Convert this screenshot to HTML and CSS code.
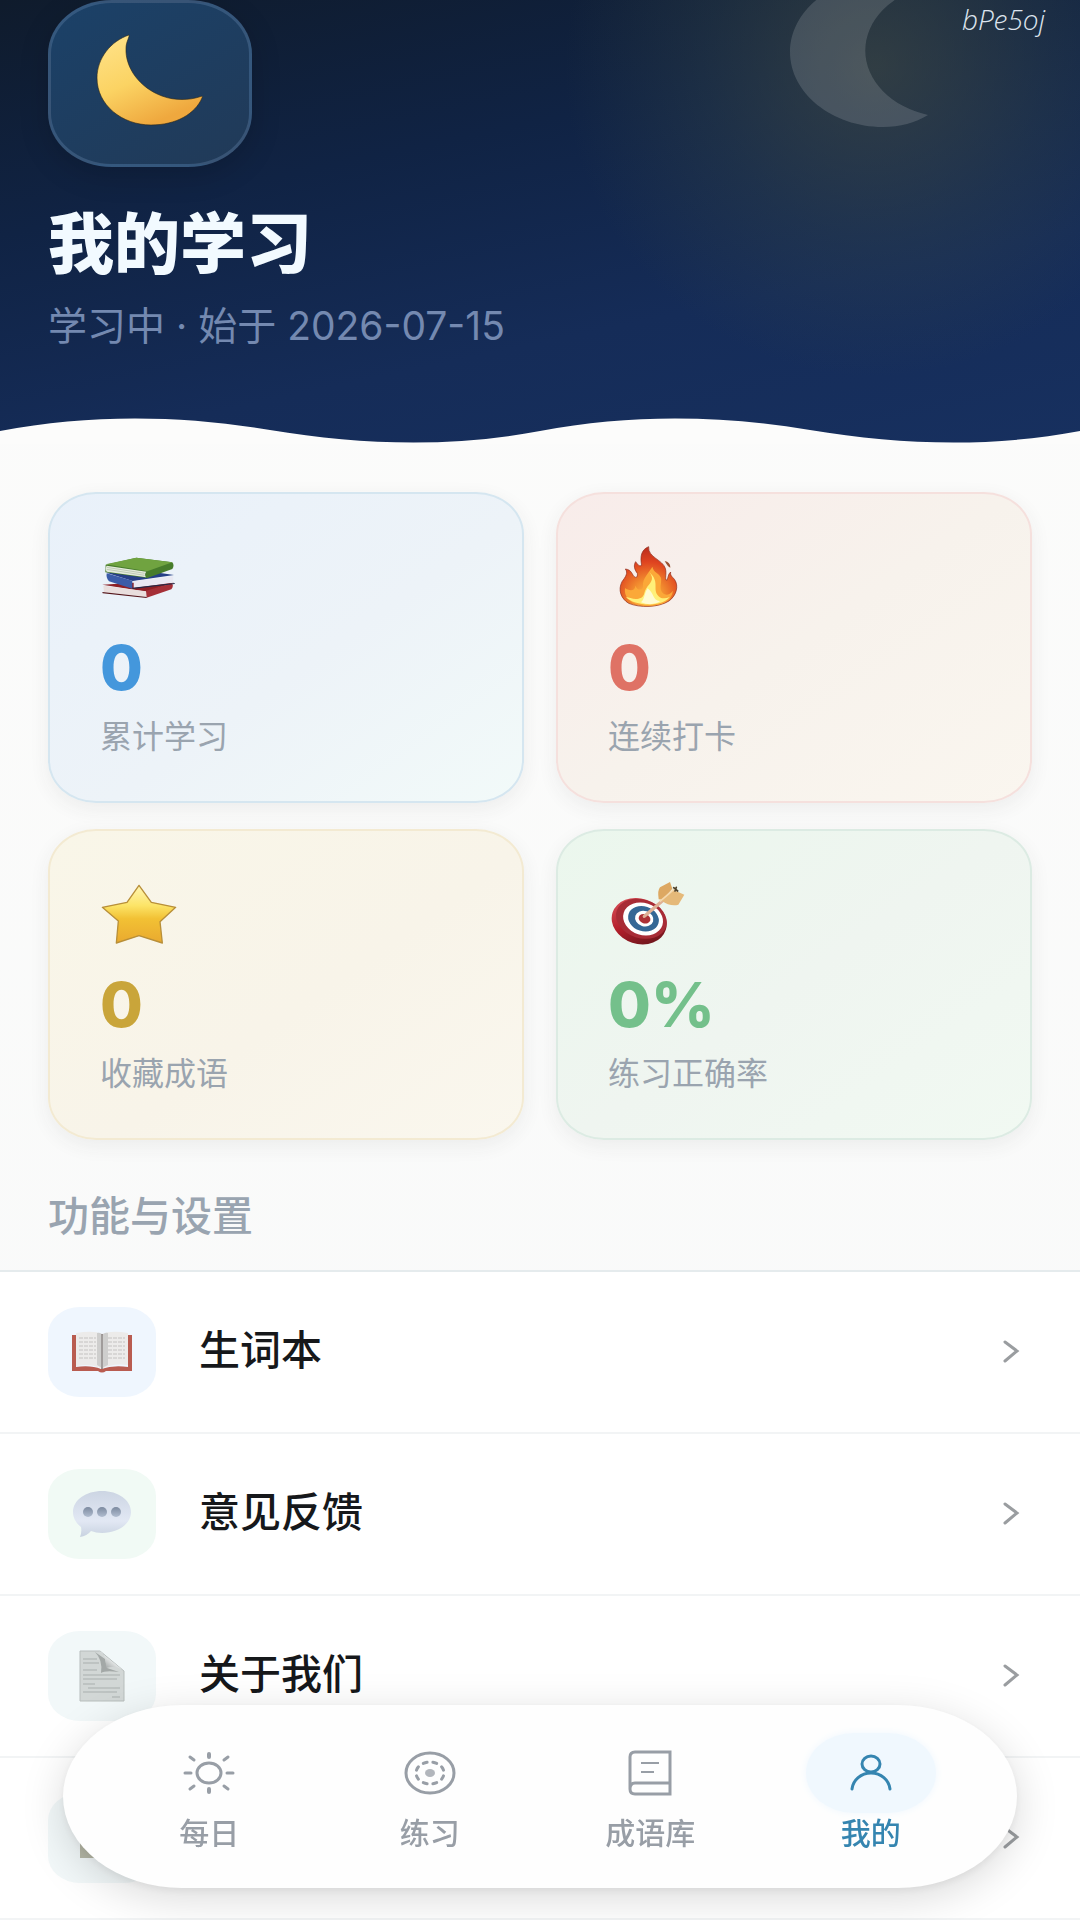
FILE: index.html
```
<!DOCTYPE html>

<html lang="zh-CN">
<head>
  <meta charset="UTF-8">
  <meta name="viewport" content="width=device-width, initial-scale=1.0">
  <title>我的学习</title>
  <link rel="stylesheet" href="styles.css">
</head>
<body>
  <!-- 顶部夜空 -->
  <header class="hero">
    <svg class="hero-moon" viewBox="0 0 144 128" aria-hidden="true">
      <path d="M140 -14C122 -22 110 -23 95 -23C44 -23 2 11 2 52C2 93 44 127 95 127C112 127 127 123 140 115A86 67 0 0 1 140 -14Z" fill="#fff" fill-opacity=".14"/>
    </svg>
    <span class="hero-tag">bPe5oj</span>

    <div class="avatar">
      <svg width="108" height="92" viewBox="0 0 108 92" aria-hidden="true">
        <defs>
          <linearGradient id="moon" x1="0" y1="0" x2=".5" y2="1">
            <stop offset="0" stop-color="#ffe48c"/>
            <stop offset=".55" stop-color="#fbd363"/>
            <stop offset="1" stop-color="#efa83e"/>
          </linearGradient>
        </defs>
        <path d="M33 1C15 7 1 24 1 44C1 71 26 91 55 91C80 91 99 80 106 64C107 62 106 62 103 63C94 66 79 67 66 62C44 54 29 34 30 14C30 8 34 2 33 1Z" fill="url(#moon)" stroke="#2a2417" stroke-opacity=".6"/>
      </svg>
    </div>
    <h1>我的学习</h1>
    <p class="hero-sub">学习中 · 始于 2026-07-15</p>

    <svg class="wave" viewBox="0 0 1080 26" preserveAspectRatio="none" aria-hidden="true">
      <path d="M0 13C90 -4 180 -3 270 12S450 30 540 13S720 -3 810 12S990 30 1080 13V26H0Z" fill="#fcfcfb"/>
    </svg>
  </header>

  <main>
    <!-- 学习统计 -->
    <section class="stats">
      <div class="card blue">
        <svg class="emoji" viewBox="0 0 240 210" aria-hidden="true">
          <path d="M7 128L100 122L222 122L140 149Z" fill="#8d2026"/>
          <path d="M10 131L138 148V165L12 151Z" fill="#e9dedd"/>
          <path d="M138 146L216 124Q222 132 214 142L140 167Z" fill="#a52f37"/>
          <path d="M7 150L140 165V168L8 154Z" fill="#551519"/>
          <path d="M19 92L120 84L222 99L98 117Z" fill="#263f86"/>
          <path d="M20 94L97 116V140L27 118Q18 108 20 94Z" fill="#3b5ca8"/>
          <path d="M101 118L220 103L218 122L101 138Z" fill="#e9e9f3"/>
          <path d="M97 137L224 123V126L98 141Z" fill="#222947"/>
          <path d="M17 68L109 47L217 61Q224 70 217 81L142 108L16 91Z" fill="#477c2b"/>
          <path d="M17 67L109 47L217 61L142 88Z" fill="#70a340"/>
          <path d="M20 71L139 89Q132 97 138 106L20 89Q14 80 20 71Z" fill="#e4ebdc"/>
          <path d="M20 76L134 94M20 82L134 100" stroke="#aab9a1" stroke-width="2"/>
        </svg>
        <strong>0</strong>
        <span>累计学习</span>
      </div>
      <div class="card red">
        <svg class="emoji" viewBox="0 0 240 210" aria-hidden="true">
          <defs>
            <radialGradient id="fire" cx=".5" cy=".85" r=".85">
              <stop offset="0" stop-color="#ffc348"/>
              <stop offset=".35" stop-color="#f18a2e"/>
              <stop offset=".7" stop-color="#df4420"/>
              <stop offset="1" stop-color="#b92c1d"/>
            </radialGradient>
          </defs>
          <path d="M122 14C99 23 96 45 101 70C92 75 89 66 83 59C76 70 79 82 88 94C90 105 84 109 79 104C72 99 72 83 52 81C61 93 53 104 42 119C29 144 39 170 62 184C96 198 151 197 183 177C205 161 213 132 200 113C193 104 186 101 188 90C179 97 182 107 176 115C169 110 177 96 172 79C164 53 119 46 122 14Z" fill="url(#fire)" stroke="#8d2b19" stroke-width="2"/>
          <path d="M133 74C127 88 102 108 105 132C106 145 89 148 82 131C82 148 63 147 51 138C47 171 75 190 117 191C162 192 191 177 195 146C185 160 172 161 165 154C150 140 164 120 158 106C153 92 137 93 133 74Z" fill="#fba838"/>
          <path d="M124 91C138 108 132 118 119 133C106 149 112 160 100 167C81 176 66 166 54 165C76 191 158 199 185 165C170 172 155 170 148 158C135 139 155 118 124 91Z" fill="#fff078"/>
          <path d="M119 139C108 155 110 173 99 181C120 190 145 187 156 178C133 174 139 155 119 139Z" fill="#fffbd2"/>
          <path d="M170 57Q187 60 187 77Q180 75 170 57Z" fill="#9a5132"/>
        </svg>
        <strong>0</strong>
        <span>连续打卡</span>
      </div>
      <div class="card gold">
        <svg class="emoji" viewBox="0 0 240 210" aria-hidden="true">
          <defs>
            <linearGradient id="star" x1="0" y1="0" x2="0" y2="1">
              <stop offset="0" stop-color="#fff6b4"/>
              <stop offset=".35" stop-color="#fce467"/>
              <stop offset=".58" stop-color="#f2c134"/>
              <stop offset="1" stop-color="#e9a92f"/>
            </linearGradient>
          </defs>
          <path d="M117 19L154 70L227 85L180 128L187 192L117 170L49 192L55 126L7 85L81 70Z" fill="url(#star)" stroke="#b88f39" stroke-width="4" stroke-linejoin="round"/>
        </svg>
        <strong>0</strong>
        <span>收藏成语</span>
      </div>
      <div class="card green">
        <svg class="emoji" viewBox="0 0 240 210" aria-hidden="true">
          <defs>
            <linearGradient id="board" x1="0" y1="0" x2="1" y2="1">
              <stop offset="0" stop-color="#df5a62"/>
              <stop offset=".5" stop-color="#b31f2b"/>
              <stop offset="1" stop-color="#571217"/>
            </linearGradient>
          </defs>
          <g transform="rotate(18 98 126)">
            <ellipse cx="94" cy="128" rx="84" ry="68" fill="url(#board)"/>
            <ellipse cx="98" cy="119" rx="78" ry="58" fill="#a82c36"/>
            <ellipse cx="103" cy="118" rx="61" ry="48" fill="#fff"/>
            <ellipse cx="104" cy="117" rx="47" ry="37" fill="#346795"/>
            <ellipse cx="106" cy="116" rx="28" ry="23" fill="#fff"/>
            <ellipse cx="107" cy="116" rx="18" ry="14" fill="#ad3035"/>
          </g>
          <path d="M109 112L190 43" stroke="#dfb096" stroke-width="10" stroke-linecap="round"/>
          <path d="M152 61Q148 34 156 25L186 9L193 29L164 62Z" fill="#dda862"/>
          <path d="M161 65L195 32L229 47L211 77Q186 83 161 65Z" fill="#e5b979"/>
          <path d="M155 68L205 25" stroke="#f5d9ae" stroke-width="5"/>
          <path d="M197 26L209 36M201 36L205 25" stroke="#4d412c" stroke-width="5" stroke-linecap="round"/>
        </svg>
        <strong>0%</strong>
        <span>练习正确率</span>
      </div>
    </section>

    <!-- 功能列表 -->
    <h2>功能与设置</h2>
    <nav class="menu">
      <a href="#words">
        <span class="menu-icon sky">
          <svg width="62" height="42" viewBox="0 0 62 42" aria-hidden="true">
            <path d="M1 4H5V36Q20 34 30 38Q42 34 57 36V4H61V40H35Q31 43 27 40H1Z" fill="#b95c50"/>
            <path d="M5 2Q23 -1 31 3Q40 -1 57 2V34Q40 32 31 38Q21 32 5 35Z" fill="#ecebea"/>
            <path d="M31 3V38" stroke="#98908e" stroke-width="2"/>
            <path d="M26 2Q31 1 31 5V37L26 34ZM31 5Q33 1 37 2V34L31 37Z" fill="#aaa" fill-opacity=".45"/>
            <path d="M8 7H25M8 11H25M8 15H25M8 19H25M8 23H25M8 27H25M37 7H54M37 11H54M37 15H54M37 19H54M37 23H54M37 27H54" stroke="#c4c2c1" stroke-dasharray="4 1"/>
          </svg>
        </span>
        <span class="menu-name">生词本</span>
        <svg class="chevron" viewBox="0 0 40 40" aria-hidden="true"><path d="M13 10L25 19L13 29"/></svg>
      </a>
      <a href="#feedback">
        <span class="menu-icon mint">
          <svg width="60" height="48" viewBox="0 0 60 48" aria-hidden="true">
            <defs>
              <linearGradient id="bubble" x1="0" y1="0" x2="0" y2="1">
                <stop offset="0" stop-color="#ccd5e3"/>
                <stop offset=".65" stop-color="#e2e8f4"/>
                <stop offset="1" stop-color="#c8d2e0"/>
              </linearGradient>
              <linearGradient id="dot" x1="0" y1="0" x2="0" y2="1">
                <stop offset="0" stop-color="#7c8a9f"/>
                <stop offset="1" stop-color="#b1bdd0"/>
              </linearGradient>
            </defs>
            <path d="M30 1C46 1 59 10 59 22S46 43 30 43Q24 43 19 41Q15 46 8 47Q10 42 9 37C4 33 1 28 1 22C1 10 14 1 30 1Z" fill="url(#bubble)"/>
            <g fill="url(#dot)"><circle cx="16" cy="22" r="5"/><circle cx="30" cy="22" r="5"/><circle cx="44" cy="22" r="5"/></g>
          </svg>
        </span>
        <span class="menu-name">意见反馈</span>
        <svg class="chevron" viewBox="0 0 40 40" aria-hidden="true"><path d="M13 10L25 19L13 29"/></svg>
      </a>
      <a href="#about">
        <span class="menu-icon ice">
          <svg width="46" height="52" viewBox="0 0 46 52" aria-hidden="true">
            <defs>
              <linearGradient id="fold" x1="0" y1="1" x2="1" y2="0">
                <stop offset="0" stop-color="#767b7a"/>
                <stop offset=".5" stop-color="#e2e5e5"/>
                <stop offset="1" stop-color="#8e9493"/>
              </linearGradient>
            </defs>
            <path d="M1 1H21L45 21V51H1Z" fill="#d2d7d6" stroke="#b7bdbc"/>
            <path d="M16 2L26 9L28 18L40 22Q26 20 22 23Q24 10 16 2Z" fill="#8f9493" fill-opacity=".7"/>
            <path d="M20 1Q27 3 27 18Q38 15 45 21Z" fill="url(#fold)"/>
            <path d="M4 9H18M4 13H20M4 20H18M4 25H41M4 29H38M4 34H16M9 38H41M4 42H38M33 47H41" stroke="#a9afae"/>
          </svg>
        </span>
        <span class="menu-name">关于我们</span>
        <svg class="chevron" viewBox="0 0 40 40" aria-hidden="true"><path d="M13 10L25 19L13 29"/></svg>
      </a>
      <a href="#more" aria-label="更多">
        <span class="menu-icon ice">
          <svg width="46" height="42" viewBox="0 0 46 42" aria-hidden="true"><path d="M1 1H45V41H1Z" fill="#b5b7a6"/></svg>
        </span>
        <span class="menu-name"></span>
        <svg class="chevron" viewBox="0 0 40 40" aria-hidden="true"><path d="M13 10L25 19L13 29"/></svg>
      </a>
    </nav>
  </main>

  <!-- 底部导航 -->
  <nav class="tabbar">
    <a href="#daily">
      <span class="tab-icon">
        <svg width="52" height="44" viewBox="0 0 52 44" aria-hidden="true">
          <g fill="none" stroke="currentColor" stroke-linecap="round">
            <ellipse cx="26" cy="22" rx="12" ry="10" stroke-width="3"/>
            <path d="M26 3V6M26 38V41" stroke-width="4"/>
            <path d="M2 22H8M44 22H50M7 6L11 9M45 6L41 9M7 38L11 35M45 38L41 35" stroke-width="3"/>
          </g>
        </svg>
      </span>
      每日
    </a>
    <a href="#practice">
      <span class="tab-icon">
        <svg width="52" height="44" viewBox="0 0 52 44" aria-hidden="true">
          <g fill="none" stroke="currentColor" stroke-width="3">
            <ellipse cx="26" cy="22" rx="24" ry="20"/>
            <ellipse cx="26" cy="22" rx="14" ry="11" pathLength="80" stroke-dasharray="4 6" stroke-dashoffset="-3" stroke-linecap="round"/>
          </g>
          <ellipse cx="26" cy="22" rx="5" ry="4" fill="currentColor" fill-opacity=".75"/>
        </svg>
      </span>
      练习
    </a>
    <a href="#library">
      <span class="tab-icon">
        <svg width="46" height="48" viewBox="0 0 46 48" aria-hidden="true">
          <g fill="none" stroke="currentColor" stroke-width="3">
            <path d="M43 34V3H8Q3 3 3 8V40Q3 45 8 45H43V34H8Q3 34 3 40"/>
            <path d="M14 14H32M14 23H27" stroke-width="2"/>
          </g>
        </svg>
      </span>
      成语库
    </a>
    <a href="#mine" class="active">
      <span class="tab-icon">
        <svg width="44" height="40" viewBox="0 0 44 40" aria-hidden="true">
          <g fill="none" stroke="currentColor" stroke-width="4" stroke-linecap="round">
            <ellipse cx="22" cy="11" rx="9" ry="8" stroke-width="3"/>
            <path d="M3 36C4 27 12 20 22 20S40 27 41 36" stroke-width="3"/>
          </g>
        </svg>
      </span>
      我的
    </a>
  </nav>
</body>
</html>
```
FILE: styles.css
```
* {
  box-sizing: border-box;
}

body {
  margin: 0;
  background: linear-gradient(#fcfcfb, #f8f9f9);
  color: #16181b;
  font-family: "Inter", "Noto Sans CJK SC", sans-serif;
}

a {
  color: inherit;
  text-decoration: none;
}

/* 顶部 */
.hero {
  position: relative;
  overflow: hidden;
  padding: 0 48px 94px;
  background:
    radial-gradient(circle at 81% 15%, rgba(70, 78, 66, 0.6), rgba(60, 75, 70, 0.28) 170px, rgba(60, 75, 70, 0) 310px),
    linear-gradient(168deg, #0f1b2c 0%, #102344 35%, #152c58 68%, #17305f 100%);
}

.hero-moon {
  position: absolute;
  top: 0;
  right: 148px;
  width: 144px;
  height: 128px;
}

.hero-tag {
  position: absolute;
  top: 1px;
  right: 35px;
  color: #dde4ee;
  font-family: "Open Sans", sans-serif;
  font-size: 28px;
  font-style: italic;
  font-weight: 300;
  line-height: 36px;
}

.avatar {
  display: flex;
  align-items: center;
  justify-content: center;
  width: 204px;
  height: 167px;
  padding-bottom: 8px;
  border: 3px solid rgba(120, 150, 190, 0.28);
  border-radius: 64px / 54px;
  background: linear-gradient(150deg, #1b4168, #213a58);
  box-shadow: 0 8px 30px rgba(0, 0, 0, 0.16);
}

h1 {
  margin: 37px 0 0;
  color: #f2faff;
  font-size: 66px;
  font-weight: 800;
  line-height: 80px;
}

.hero-sub {
  margin: 18px 0 0;
  color: #7489b0;
  font-size: 39px;
  line-height: 48px;
}

.wave {
  position: absolute;
  bottom: 0;
  left: 0;
  display: block;
  width: 100%;
  height: 26px;
}

/* 统计卡片 */
.stats {
  display: grid;
  grid-template-columns: 1fr 1fr;
  gap: 26px 32px;
  padding: 48px 48px 0;
}

.card {
  display: flex;
  flex-direction: column;
  align-items: flex-start;
  padding: 48px 50px 44px;
  border: 2px solid;
  border-radius: 48px / 42px;
  box-shadow: 0 6px 20px rgba(60, 60, 50, 0.07);
}

.emoji {
  width: 80px;
  height: 70px;
}

.card strong {
  margin-top: 20px;
  font-size: 62px;
  font-weight: 800;
  line-height: 72px;
}

.card span {
  margin-top: 13px;
  color: #9aa4af;
  font-size: 32px;
  line-height: 40px;
}

.blue {
  border-color: #d5e6f0;
  background: linear-gradient(145deg, #e9f1fa, #edf3f8 55%, #f2faf9);
}

.blue strong {
  color: #4497dc;
}

.red {
  border-color: #f5e0dd;
  background: linear-gradient(145deg, #f8ecea, #f7f2ec 50%, #faf6ef);
}

.red strong {
  color: #df7265;
}

.gold {
  border-color: #f3ead2;
  background: linear-gradient(145deg, #f9f6e8, #f8f4e9 55%, #faf7ee);
}

.gold strong {
  color: #c9a53a;
}

.green {
  border-color: #dcebe3;
  background: linear-gradient(145deg, #ebf7ed, #eff5f0 50%, #f1f9f2);
}

.green strong {
  color: #74c08b;
}

/* 列表 */
h2 {
  margin: 0;
  padding: 52px 48px 30px;
  color: #99a4b0;
  font-size: 41px;
  font-weight: 500;
  line-height: 48px;
}

.menu {
  border-top: 2px solid #e5ebed;
  background: #fff;
}

.menu a {
  display: flex;
  align-items: center;
  height: 162px;
  padding: 0 48px;
  border-bottom: 2px solid #f2f4f5;
}

.menu-icon {
  display: flex;
  align-items: center;
  justify-content: center;
  width: 108px;
  height: 90px;
  border-radius: 32px / 27px;
}

.sky {
  background: #eff6fe;
}

.mint {
  background: #f1faf5;
}

.ice {
  background: #f2f8f9;
}

.menu-name {
  flex: 1;
  margin-left: 43px;
  padding-bottom: 5px;
  font-size: 41px;
  font-weight: 500;
  line-height: 56px;
}

.chevron {
  width: 40px;
  height: 40px;
  fill: none;
  stroke: #9a9da0;
  stroke-width: 3;
  stroke-linecap: round;
}

/* 底部导航 */
.tabbar {
  position: fixed;
  right: 63px;
  bottom: 32px;
  left: 63px;
  display: flex;
  padding: 28px 36px 35px;
  border-radius: 120px / 92px;
  background: #fefefe;
  box-shadow: 0 10px 44px rgba(0, 0, 0, 0.15), 0 3px 8px rgba(0, 0, 0, 0.06);
}

.tabbar a {
  display: flex;
  flex: 1;
  flex-direction: column;
  align-items: center;
  color: #989ea6;
  font-size: 30px;
  font-weight: 500;
  line-height: 40px;
}

.tab-icon {
  display: flex;
  align-items: center;
  justify-content: center;
  width: 130px;
  height: 80px;
  border-radius: 48px / 40px;
}

.tabbar .active {
  color: #3585b0;
}

.active .tab-icon {
  background: #f0f8fe;
  box-shadow: 0 0 8px #f0f8fe;
}
```
